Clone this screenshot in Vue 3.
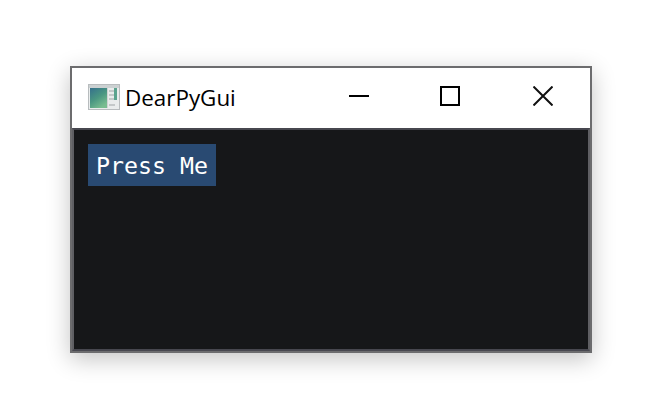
<script setup>
const title = 'DearPyGui'
const label = 'Press Me'
</script>

<template>
  <div class="page">
    <div class="window">
      <header class="titlebar">
        <svg class="app-icon" viewBox="0 0 32 26" width="32" height="26">
          <defs>
            <linearGradient id="pane" x1="0" y1="0" x2="0.6" y2="1">
              <stop offset="0" stop-color="#35708c" />
              <stop offset="0.55" stop-color="#4a9782" />
              <stop offset="1" stop-color="#78bd90" />
            </linearGradient>
          </defs>
          <rect x="0.5" y="0.5" width="31" height="25" fill="#e9ecec" stroke="#b8bcbe" />
          <rect x="1" y="1" width="30" height="3" fill="#ccd1d2" />
          <rect x="2" y="4" width="17" height="20" fill="url(#pane)" />
          <rect x="19" y="4" width="1" height="20" fill="#cfd3d4" />
          <rect x="21" y="6" width="5" height="2" fill="#c4c8c9" />
          <rect x="21" y="10" width="5" height="2" fill="#c4c8c9" />
          <rect x="21" y="14" width="5" height="2" fill="#c4c8c9" />
          <rect x="21" y="20" width="6" height="2" fill="#c4c8c9" />
          <rect x="26" y="4" width="3" height="12" fill="#5ba38e" />
        </svg>
        <span class="title">{{ title }}</span>
        <div class="controls">
          <button class="ctl minimize">
            <svg viewBox="0 0 20 20" width="20" height="20"><path d="M0 10h20" stroke="#000" stroke-width="2" fill="none" /></svg>
          </button>
          <button class="ctl">
            <svg viewBox="0 0 20 20" width="20" height="20"><rect x="1" y="1" width="18" height="18" stroke="#000" stroke-width="2" fill="none" /></svg>
          </button>
          <button class="ctl close">
            <svg viewBox="0 0 20 20" width="20" height="20"><path d="M0.5 0.5L19.5 19.5M19.5 0.5L0.5 19.5" stroke="#111" stroke-width="2" fill="none" /></svg>
          </button>
        </div>
      </header>
      <main class="viewport">
        <button class="press">{{ label }}</button>
      </main>
    </div>
  </div>
</template>

<style>
html, body {
  margin: 0;
  background: #fff;
}
</style>

<style scoped>
.page {
  width: 648px;
  height: 412px;
  box-sizing: border-box;
  padding: 66px 56px 59px 70px;
  overflow: hidden;
}

.window {
  display: flex;
  flex-direction: column;
  height: 100%;
  box-sizing: border-box;
  border: 2px solid #6c6c6e;
  background: #fff;
  box-shadow: 0 6px 22px rgba(0, 0, 0, 0.24);
}

.titlebar {
  display: flex;
  align-items: center;
  height: 60px;
  padding-left: 16px;
  flex: none;
}

.app-icon {
  flex: none;
  margin-top: -2px;
}

.title {
  margin-left: 5px;
  font-family: "Open Sans", "Noto Sans", sans-serif;
  font-size: 22.4px;
  color: #000;
  margin-top: -1px;
}

.controls {
  display: flex;
  height: 100%;
  margin-left: auto;
}

.ctl {
  display: flex;
  align-items: center;
  justify-content: center;
  width: 92px;
  height: 100%;
  padding: 0;
  border: none;
  background: transparent;
  margin-top: -2px;
}

.minimize {
  padding-left: 2px;
}

.close {
  width: 94px;
}

.viewport {
  flex: 1;
  box-sizing: border-box;
  border: 2px solid #47474f;
  border-left-color: #5f5f63;
  border-right-color: #5f5f63;
  background: #161719;
  padding: 14px;
}

.press {
  display: block;
  width: 128px;
  height: 42px;
  padding: 0;
  border: none;
  background: #294a72;
  color: #fff;
  font-family: "DejaVu Sans Mono", "Liberation Mono", monospace;
  font-size: 23.25px;
  text-align: center;
}
</style>
